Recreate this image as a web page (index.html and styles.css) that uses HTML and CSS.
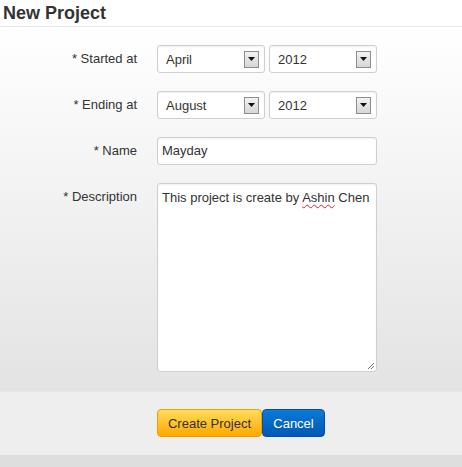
FILE: index.html
```html
<!DOCTYPE html>
<html>
<head>
<meta charset="utf-8">
<link rel="stylesheet" href="styles.css">
</head>
<body>
<div class="header"><h1 class="title">New Project</h1></div>
<div class="form">
  <div class="row">
    <label class="label">* Started at</label>
    <div class="controls">
      <div class="select small"><span>April</span><span class="arrow"><svg width="7" height="4" viewBox="0 0 7 4"><path d="M0 0H7L3.5 4Z" fill="#111"/></svg></span></div>
      <div class="select small"><span>2012</span><span class="arrow"><svg width="7" height="4" viewBox="0 0 7 4"><path d="M0 0H7L3.5 4Z" fill="#111"/></svg></span></div>
    </div>
  </div>
  <div class="row">
    <label class="label">* Ending at</label>
    <div class="controls">
      <div class="select small"><span>August</span><span class="arrow"><svg width="7" height="4" viewBox="0 0 7 4"><path d="M0 0H7L3.5 4Z" fill="#111"/></svg></span></div>
      <div class="select small"><span>2012</span><span class="arrow"><svg width="7" height="4" viewBox="0 0 7 4"><path d="M0 0H7L3.5 4Z" fill="#111"/></svg></span></div>
    </div>
  </div>
  <div class="row">
    <label class="label">* Name</label>
    <div class="controls">
      <div class="input">Mayday</div>
    </div>
  </div>
  <div class="row">
    <label class="label">* Description</label>
    <div class="controls">
      <div class="textarea">This project is create by <span class="misspelled">Ashin</span> Chen<svg class="grip" width="8" height="8" viewBox="0 0 8 8"><path d="M7 1L1 7M7 4L4 7" stroke="#777" stroke-width="1"/></svg></div>
    </div>
  </div>
</div>
<div class="footer">
  <button class="btn btn-primary">Create Project</button><button class="btn btn-cancel">Cancel</button>
</div>
<div class="bottom"></div>
</body>
</html>
```
FILE: styles.css
```css
html, body {
  margin: 0;
  padding: 0;
}
body {
  width: 462px;
  height: 467px;
  font-family: "Liberation Sans", Arial, sans-serif;
  font-size: 13px;
  color: #333;
  background: #dedede;
  overflow: hidden;
}
.header {
  height: 26px;
  background: #fff;
  border-bottom: 1px solid #e4e4e4;
}
.title {
  margin: 0;
  padding: 2px 0 0 3px;
  font-size: 18px;
  line-height: 22px;
  font-weight: bold;
  color: #333;
}
.form {
  height: 364px;
  box-sizing: border-box;
  padding-top: 18px;
  background: linear-gradient(#ffffff, #e3e3e3);
  display: flex;
  flex-direction: column;
  gap: 18px;
}
.row {
  display: grid;
  grid-template-columns: 137px 220px;
  column-gap: 20px;
}
.label {
  text-align: right;
  line-height: 28px;
  color: #333;
}
.controls {
  display: flex;
  gap: 4px;
}
.select, .input, .textarea {
  box-sizing: border-box;
  background: #fff;
  border: 1px solid #cfcfcf;
  border-radius: 3px;
  box-shadow: inset 0 1px 2px rgba(0,0,0,0.06);
  color: #333;
}
.select {
  width: 108px;
  height: 28px;
  display: flex;
  align-items: center;
  justify-content: space-between;
  padding: 0 5px 0 8px;
}
.arrow {
  box-sizing: border-box;
  width: 15px;
  height: 17px;
  border: 1px solid #8c8c8c;
  background: linear-gradient(#f2f2f2, #d6d6d6);
  display: flex;
  align-items: center;
  justify-content: center;
}
.arrow svg {
  display: block;
}
.input {
  width: 220px;
  height: 28px;
  line-height: 26px;
  padding: 0 4px;
}
.textarea {
  position: relative;
  width: 220px;
  height: 189px;
  padding: 6px 4px;
  line-height: 16px;
}
.misspelled {
  text-decoration: underline wavy #e02020;
  text-decoration-thickness: 1px;
  text-underline-offset: 2px;
}
.grip {
  position: absolute;
  right: 1px;
  bottom: 1px;
}
.footer {
  height: 64px;
  box-sizing: border-box;
  background: #eeeeee;
  border-top: 1px solid #e6e6e6;
  padding: 17px 0 0 157px;
  display: flex;
  align-items: flex-start;
}
.btn {
  height: 28px;
  margin: 0;
  font-family: "Liberation Sans", Arial, sans-serif;
  font-size: 13px;
  border-radius: 4px;
  padding: 0;
  white-space: nowrap;
  box-sizing: border-box;
  cursor: pointer;
}
.btn-primary {
  width: 105px;
  color: #333;
  background: linear-gradient(#ffdc5a, #ffa800);
  border: 1px solid #eaa200;
}
.btn-cancel {
  width: 63px;
  color: #fff;
  background: linear-gradient(#0a7ad8, #0058b4);
  border: 1px solid #0052a8;
}
.bottom {
  height: 12px;
  background: #dedede;
}
```
